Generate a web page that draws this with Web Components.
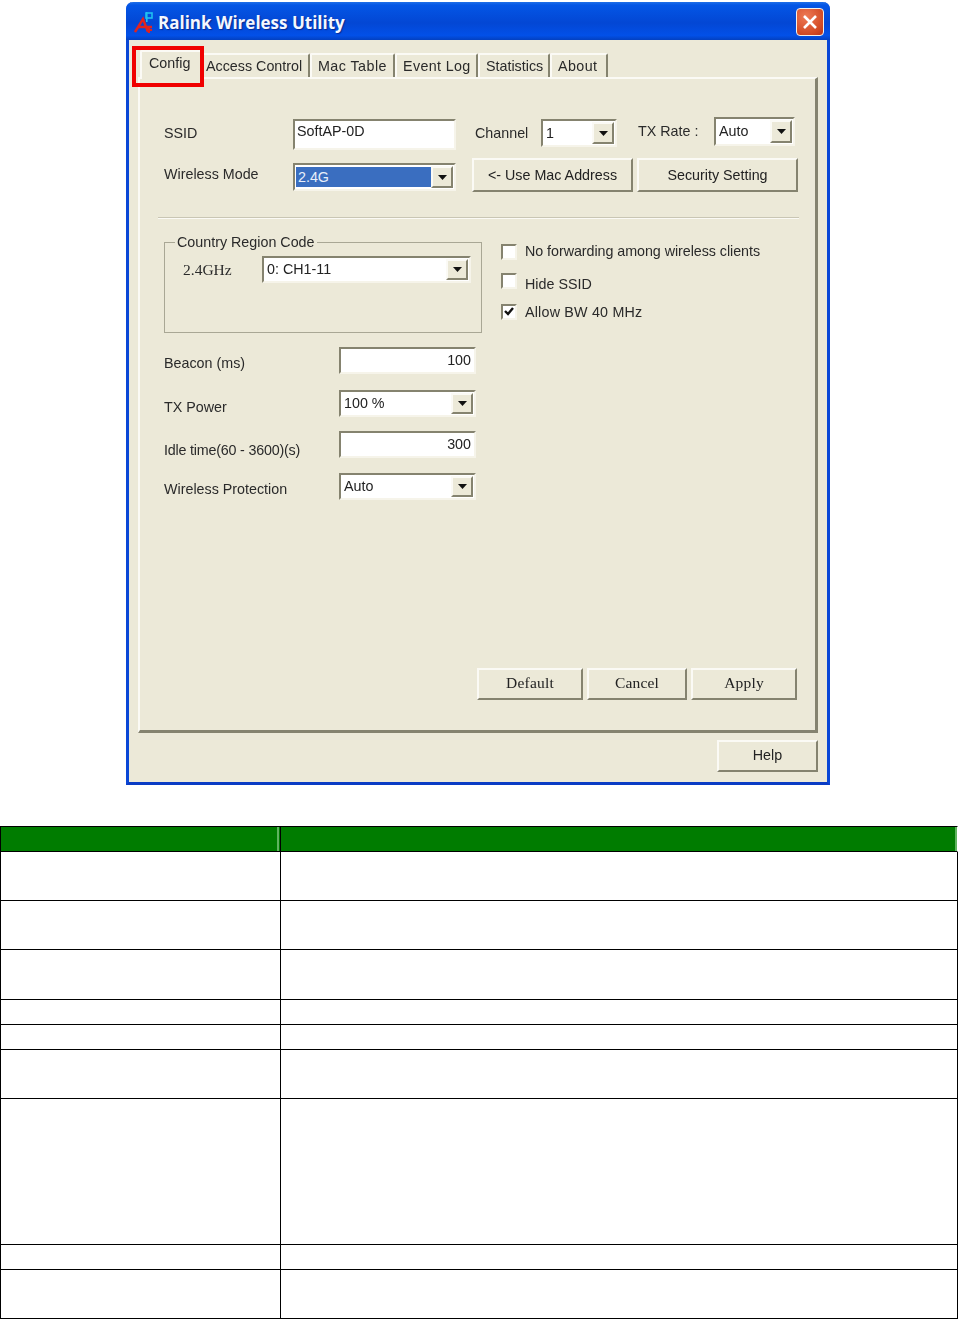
<!DOCTYPE html>
<html>
<head>
<meta charset="utf-8">
<title>Ralink Wireless Utility</title>
<style>
html, body { margin: 0; padding: 0; background: #fff; }
body { font-family: "Liberation Sans", Arial, sans-serif; width: 958px; height: 1319px; overflow: hidden; }
</style>
</head>
<body>
<ralink-window>
  <config-page></config-page>
</ralink-window>
<param-table></param-table>

<script>
class XpButton extends HTMLElement {
    constructor(){
        super();
        this.attachShadow({mode:"open"});
    }
    connectedCallback(){
        this.shadowRoot.innerHTML = `
        <style>
            :host {
                display: flex;
                align-items: center;
                justify-content: center;
                box-sizing: border-box;
                background: #ece9d8;
                border-top: 2px solid #fbfaf5;
                border-left: 2px solid #fbfaf5;
                border-right: 2px solid #85836f;
                border-bottom: 2px solid #85836f;
                color: #222;
                font-size: 14.3px;
                white-space: nowrap;
            }
            :host([serif]) {
                font-family: "Liberation Serif", serif;
                font-size: 15.5px;
                letter-spacing: .2px;
                padding-bottom: 3px;
            }
        </style>
        <slot></slot>`;
    }
}
customElements.define("xp-button", XpButton);

class XpField extends HTMLElement {
    constructor(){
        super();
        this.attachShadow({mode:"open"});
    }
    connectedCallback(){
        const arrow = this.hasAttribute("combo") ? `
            <span class="drop">
                <svg width="9" height="5" viewBox="0 0 9 5"><path d="M0 0H9L4.5 5Z" fill="#111"/></svg>
            </span>` : "";
        this.shadowRoot.innerHTML = `
        <style>
            :host {
                display: flex;
                box-sizing: border-box;
                background: #fff;
                border-top: 2px solid #85836f;
                border-left: 2px solid #85836f;
                border-right: 2px solid #f6f4ea;
                border-bottom: 2px solid #f6f4ea;
                color: #222;
                font-size: 14.3px;
                line-height: 17px;
                overflow: hidden;
            }
            .text {
                flex: 1;
                display: flex;
                align-items: center;
                padding: 0 3px;
                white-space: nowrap;
            }
            :host([top]) .text { align-items: flex-start; padding: 2px 0 0 2px; }
            :host([right]) .text { justify-content: flex-end; }
            :host([selected]) .text {
                background: #3a6ec0;
                color: #e8eefa;
                margin: 2px 0 2px 1px;
                padding-left: 2px;
            }
            .drop {
                flex: none;
                width: 22px;
                margin: 1px 1px 1px 0;
                box-sizing: border-box;
                background: #ece9d8;
                border-top: 2px solid #fbfaf5;
                border-left: 2px solid #fbfaf5;
                border-right: 2px solid #85836f;
                border-bottom: 2px solid #85836f;
                display: flex;
                align-items: center;
                justify-content: center;
            }
        </style>
        <span class="text"><slot></slot></span>${arrow}`;
    }
}
customElements.define("xp-field", XpField);

class XpCheck extends HTMLElement {
    constructor(){
        super();
        this.attachShadow({mode:"open"});
    }
    connectedCallback(){
        const tick = this.hasAttribute("checked")
            ? `<svg width="12" height="11" viewBox="0 0 12 11"><path d="M2 5l3 3 5-6" fill="none" stroke="#111" stroke-width="2.4"/></svg>`
            : "";
        this.shadowRoot.innerHTML = `
        <style>
            :host {
                display: flex;
                align-items: center;
                gap: 8px;
                color: #2a2a2a;
                font-size: 14.3px;
                white-space: nowrap;
            }
            .box {
                flex: none;
                width: 16px;
                height: 16px;
                box-sizing: border-box;
                background: #fff;
                border-top: 2px solid #85836f;
                border-left: 2px solid #85836f;
                border-right: 2px solid #f6f4ea;
                border-bottom: 2px solid #f6f4ea;
                display: flex;
                align-items: center;
                justify-content: center;
            }
            .txt { margin-top: var(--shift, 0); }
        </style>
        <span class="box">${tick}</span><span class="txt"><slot></slot></span>`;
    }
}
customElements.define("xp-check", XpCheck);

class XpTabs extends HTMLElement {
    constructor(){
        super();
        this.attachShadow({mode:"open"});
    }
    connectedCallback(){
        this.shadowRoot.innerHTML = `
        <style>
            :host {
                display: flex;
                align-items: flex-start;
                height: 37px;
                padding-left: 2px;
                color: #2a2a2a;
                font-size: 14.3px;
                position: relative;
                z-index: 1;
            }
            .tab {
                box-sizing: border-box;
                height: 24px;
                margin-top: 13px;
                padding: 0 0 1px 6px;
                display: flex;
                align-items: center;
                border-top: 2px solid #fbfaf5;
                border-left: 2px solid #fbfaf5;
                border-right: 2px solid #85836f;
                border-top-left-radius: 2px;
                border-top-right-radius: 2px;
                white-space: nowrap;
            }
            .on {
                height: 29px;
                margin-top: 10px;
                padding: 0 0 5px 7px;
                background: #ece9d8;
            }
        </style>
        <span class="tab on" style="width:62px">Config</span>
        <span class="tab" style="width:108px;padding-left:2px">Access Control</span>
        <span class="tab" style="width:85px;letter-spacing:.45px">Mac Table</span>
        <span class="tab" style="width:83px;letter-spacing:.35px">Event Log</span>
        <span class="tab" style="width:72px">Statistics</span>
        <span class="tab" style="width:58px;letter-spacing:.4px">About</span>`;
    }
}
customElements.define("xp-tabs", XpTabs);

class RalinkWindow extends HTMLElement {
    constructor(){
        super();
        this.attachShadow({mode:"open"});
    }
    connectedCallback(){
        this.shadowRoot.innerHTML = `
        <style>
            :host {
                display: flex;
                flex-direction: column;
                position: relative;
                box-sizing: border-box;
                width: 704px;
                height: 783px;
                margin: 2px 0 0 126px;
                background: #ece9d8;
                border-radius: 7px 7px 0 0;
                border: 3px solid #0a47d6;
                border-top: 0;
                border-bottom-color: #0a3cc4;
                filter: blur(.4px);
            }
            .title {
                flex: none;
                box-sizing: border-box;
                height: 38px;
                margin: 0 -3px;
                display: flex;
                align-items: center;
                gap: 4px;
                padding: 2px 6px 0 8px;
                border-radius: 7px 7px 0 0;
                background: linear-gradient(#1f6fe8 0, #0456e6 8%, #0347d4 55%, #0250e8 88%, #0340c0 100%);
                color: #f4f7ff;
                font-family: "Open Sans", "Liberation Sans", sans-serif;
                font-weight: 700;
                font-size: 17px;
                text-shadow: 1px 1px 1px #0a2a90;
            }
            .title span { flex: 1; padding-top: 1px; }
            .close {
                flex: none;
                width: 28px;
                height: 28px;
                box-sizing: border-box;
                border: 1px solid #f4f0ea;
                border-radius: 4px;
                background: radial-gradient(circle at 35% 30%, #ee7a55, #d24a24 70%, #b8341a);
                display: flex;
                align-items: center;
                justify-content: center;
            }
            .body {
                flex: 1;
                padding: 0 9px;
                display: flex;
                flex-direction: column;
                min-height: 0;
            }
            .foot {
                flex: none;
                height: 49px;
                display: flex;
                justify-content: flex-end;
                padding: 7px 9px 0 0;
                box-sizing: border-box;
            }
            .foot xp-button { width: 101px; height: 32px; padding-bottom: 2px; }
            .mark {
                position: absolute;
                left: 3px;
                top: 44px;
                width: 72px;
                height: 41px;
                box-sizing: border-box;
                border: 4px solid #f00000;
                z-index: 2;
            }
        </style>
        <div class="title">
            <svg width="20" height="24" viewBox="0 0 20 24">
                <path d="M1 22L9 9l5 13M4 17h14" fill="none" stroke="#e0231f" stroke-width="2.4"/>
                <path d="M15 16v7M12 20h6" stroke="#e0231f" stroke-width="2"/>
                <rect x="12" y="3" width="6" height="5" fill="none" stroke="#1fc0f0" stroke-width="1.6"/>
                <path d="M12.8 2v10" stroke="#1fc0f0" stroke-width="1.6"/>
            </svg>
            <span>Ralink Wireless Utility</span>
            <div class="close">
                <svg width="16" height="16" viewBox="0 0 16 16"><path d="M2 2L14 14M14 2L2 14" stroke="#fff" stroke-width="2.6"/></svg>
            </div>
        </div>
        <div class="body">
            <xp-tabs></xp-tabs>
            <slot></slot>
        </div>
        <div class="foot"><xp-button>Help</xp-button></div>
        <div class="mark"></div>`;
    }
}
customElements.define("ralink-window", RalinkWindow);

class ConfigPage extends HTMLElement {
    constructor(){
        super();
        this.attachShadow({mode:"open"});
    }
    connectedCallback(){
        this.shadowRoot.innerHTML = `
        <style>
            :host {
                display: flex;
                flex-direction: column;
                flex: 1;
                box-sizing: border-box;
                border-top: 2px solid #fbfaf5;
                border-left: 2px solid #fbfaf5;
                border-right: 3px solid #85836f;
                border-bottom: 3px solid #85836f;
                padding: 0 17px 30px 24px;
                color: #2a2a2a;
                font-size: 14.3px;
                line-height: 17px;
                min-height: 0;
            }
            .row { display: flex; align-items: flex-start; white-space: nowrap; }
            .row1 { margin-top: 38px; height: 33px; }
            .row2 { margin-top: 8px; height: 34px; }
            hr {
                border: 0;
                height: 2px;
                margin: 25px -1px 15px -6px;
                background: linear-gradient(#c9c6b4 50%, #fbfaf5 50%);
            }
            .mid { display: flex; }
            .left { width: 318px; flex: none; }
            .right {
                margin: 9px 0 0 19px;
                display: flex;
                flex-direction: column;
            }
            fieldset {
                box-sizing: border-box;
                height: 99px;
                margin: 0;
                padding: 0;
                border: 1px solid #a9a795;
            }
            legend { padding: 0 2px; margin-left: 10px; line-height: 17px; }
            .band { display: flex; align-items: center; margin: 5px 0 0 18px; }
            .band b {
                font: 400 15.5px "Liberation Serif", serif;
                width: 79px;
                flex: none;
            }
            .line { display: flex; align-items: center; height: 27px; }
            .line span { width: 175px; flex: none; }
            .line xp-field { width: 137px; height: 27px; }
            .apply {
                margin-top: auto;
                margin-right: 1px;
                display: flex;
                justify-content: flex-end;
                gap: 4px;
            }
        </style>
        <div class="row row1">
            <span style="width:129px;margin-top:8px">SSID</span>
            <xp-field top style="width:163px;height:31px;margin-top:2px">SoftAP-0D</xp-field>
            <span style="width:66px;margin:8px 0 0 19px">Channel</span>
            <xp-field combo style="width:76px;height:28px;margin-top:2px">1</xp-field>
            <span style="width:76px;margin:6px 0 0 21px">TX Rate :</span>
            <xp-field combo style="width:81px;height:29px">Auto</xp-field>
        </div>
        <div class="row row2">
            <span style="width:129px;margin-top:8px">Wireless Mode</span>
            <xp-field combo selected style="width:163px;height:28px;margin-top:5px">2.4G</xp-field>
            <xp-button style="width:161px;height:34px;margin-left:16px">&lt;- Use Mac Address</xp-button>
            <xp-button style="width:161px;height:34px;margin-left:4px">Security Setting</xp-button>
        </div>
        <hr>
        <div class="mid">
            <div class="left">
                <fieldset>
                    <legend>Country Region Code</legend>
                    <div class="band">
                        <b>2.4GHz</b>
                        <xp-field combo style="width:209px;height:27px">0: CH1-11</xp-field>
                    </div>
                </fieldset>
                <div class="line" style="margin-top:14px"><span style="margin-top:6px">Beacon (ms)</span><xp-field right>100</xp-field></div>
                <div class="line" style="margin-top:16px"><span style="margin-top:8px">TX Power</span><xp-field combo>100 %</xp-field></div>
                <div class="line" style="margin-top:14px"><span style="margin-top:12px;letter-spacing:-.2px">Idle time(60 - 3600)(s)</span><xp-field right>300</xp-field></div>
                <div class="line" style="margin-top:15px"><span style="margin-top:6px">Wireless Protection</span><xp-field combo>Auto</xp-field></div>
            </div>
            <div class="right">
                <xp-check style="height:17px;letter-spacing:-.05px">No forwarding among wireless clients</xp-check>
                <xp-check style="height:17px;margin-top:12px;--shift:8px">Hide SSID</xp-check>
                <xp-check checked style="height:17px;margin-top:14px;--shift:2px;letter-spacing:.2px">Allow BW 40 MHz</xp-check>
            </div>
        </div>
        <div class="apply">
            <xp-button serif style="width:106px;height:32px">Default</xp-button>
            <xp-button serif style="width:100px;height:32px">Cancel</xp-button>
            <xp-button serif style="width:106px;height:32px">Apply</xp-button>
        </div>`;
    }
}
customElements.define("config-page", ConfigPage);

class ParamTable extends HTMLElement {
    constructor(){
        super();
        this.attachShadow({mode:"open"});
    }
    connectedCallback(){
        const heights = [49, 49, 50, 25, 25, 49, 146, 25, 49];
        const rows = heights.map(h => `<div style="height:${h}px"></div><div style="height:${h}px"></div>`).join("");
        this.shadowRoot.innerHTML = `
        <style>
            :host {
                display: grid;
                grid-template-columns: 280px 677px;
                width: 958px;
                margin-top: 41px;
                border-left: 1px solid #000;
                box-sizing: border-box;
            }
            div { box-sizing: border-box; border-bottom: 1px solid #000; border-right: 1px solid #000; background: #fff; }
            .head {
                height: 26px;
                border-top: 1px solid #000;
                background: linear-gradient(to left, #007c00 0 1px, #5fb45f 1px 3px, #007c00 3px);
            }
            .head.end {
                border-right-color: #fff;
                background: linear-gradient(to left, #5fb45f 0 2px, #007c00 2px);
            }
        </style>
        <div class="head"></div><div class="head end"></div>
        ${rows}`;
    }
}
customElements.define("param-table", ParamTable);
</script>
</body>
</html>
